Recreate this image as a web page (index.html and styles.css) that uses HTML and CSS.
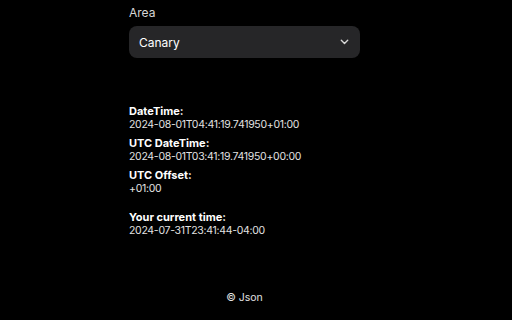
FILE: index.html
```html
<!DOCTYPE html>
<html>
<head>
<meta charset="utf-8">
<link rel="stylesheet" href="styles.css">
</head>
<body>
<div class="page">
  <div class="panel">
    <div class="label">Area</div>
    <div class="select">
      <span>Canary</span>
      <svg class="chev" width="9" height="6" viewBox="0 0 9 6"><path d="M1.3 1.3 L4.5 4.4 L7.7 1.3" fill="none" stroke="#d8d8d8" stroke-width="1.4" stroke-linecap="round" stroke-linejoin="round"/></svg>
    </div>
    <div class="info">
      <div class="item">
        <div class="k">DateTime:</div>
        <div class="v">2024-08-01T04:41:19.741950+01:00</div>
      </div>
      <div class="item">
        <div class="k">UTC DateTime:</div>
        <div class="v">2024-08-01T03:41:19.741950+00:00</div>
      </div>
      <div class="item">
        <div class="k">UTC Offset:</div>
        <div class="v">+01:00</div>
      </div>
      <div class="item current">
        <div class="k">Your current time:</div>
        <div class="v">2024-07-31T23:41:44-04:00</div>
      </div>
    </div>
  </div>
  <div class="footer">© Json</div>
</div>
</body>
</html>
```
FILE: styles.css
```css
html, body {
  margin: 0;
  padding: 0;
  background: #000;
}
body {
  font-family: Inter, "Liberation Sans", sans-serif;
  color: #fff;
}
.page {
  width: 489px;
  height: 320px;
  display: flex;
  flex-direction: column;
  align-items: center;
}
.panel {
  width: 231px;
  padding-top: 6px;
}
.label {
  font-size: 12px;
  line-height: 14px;
  color: #d6d6d6;
}
.select {
  margin-top: 6px;
  height: 32px;
  border-radius: 8px;
  background: #262628;
  display: flex;
  align-items: center;
  justify-content: space-between;
  padding: 0 11px 0 10px;
  font-size: 12px;
  color: #fff;
}
.info {
  margin-top: 46px;
  display: flex;
  flex-direction: column;
  gap: 4px;
}
.item {
  display: flex;
  flex-direction: column;
}
.k {
  font-weight: 700;
  font-size: 11px;
  line-height: 14px;
}
.v {
  font-size: 10.5px;
  line-height: 14px;
  letter-spacing: -0.3px;
  color: #e2e2e2;
}
.current {
  margin-top: 10px;
}
.footer {
  margin-top: auto;
  margin-bottom: 16px;
  font-size: 10.5px;
  color: #e2e2e2;
}
```
